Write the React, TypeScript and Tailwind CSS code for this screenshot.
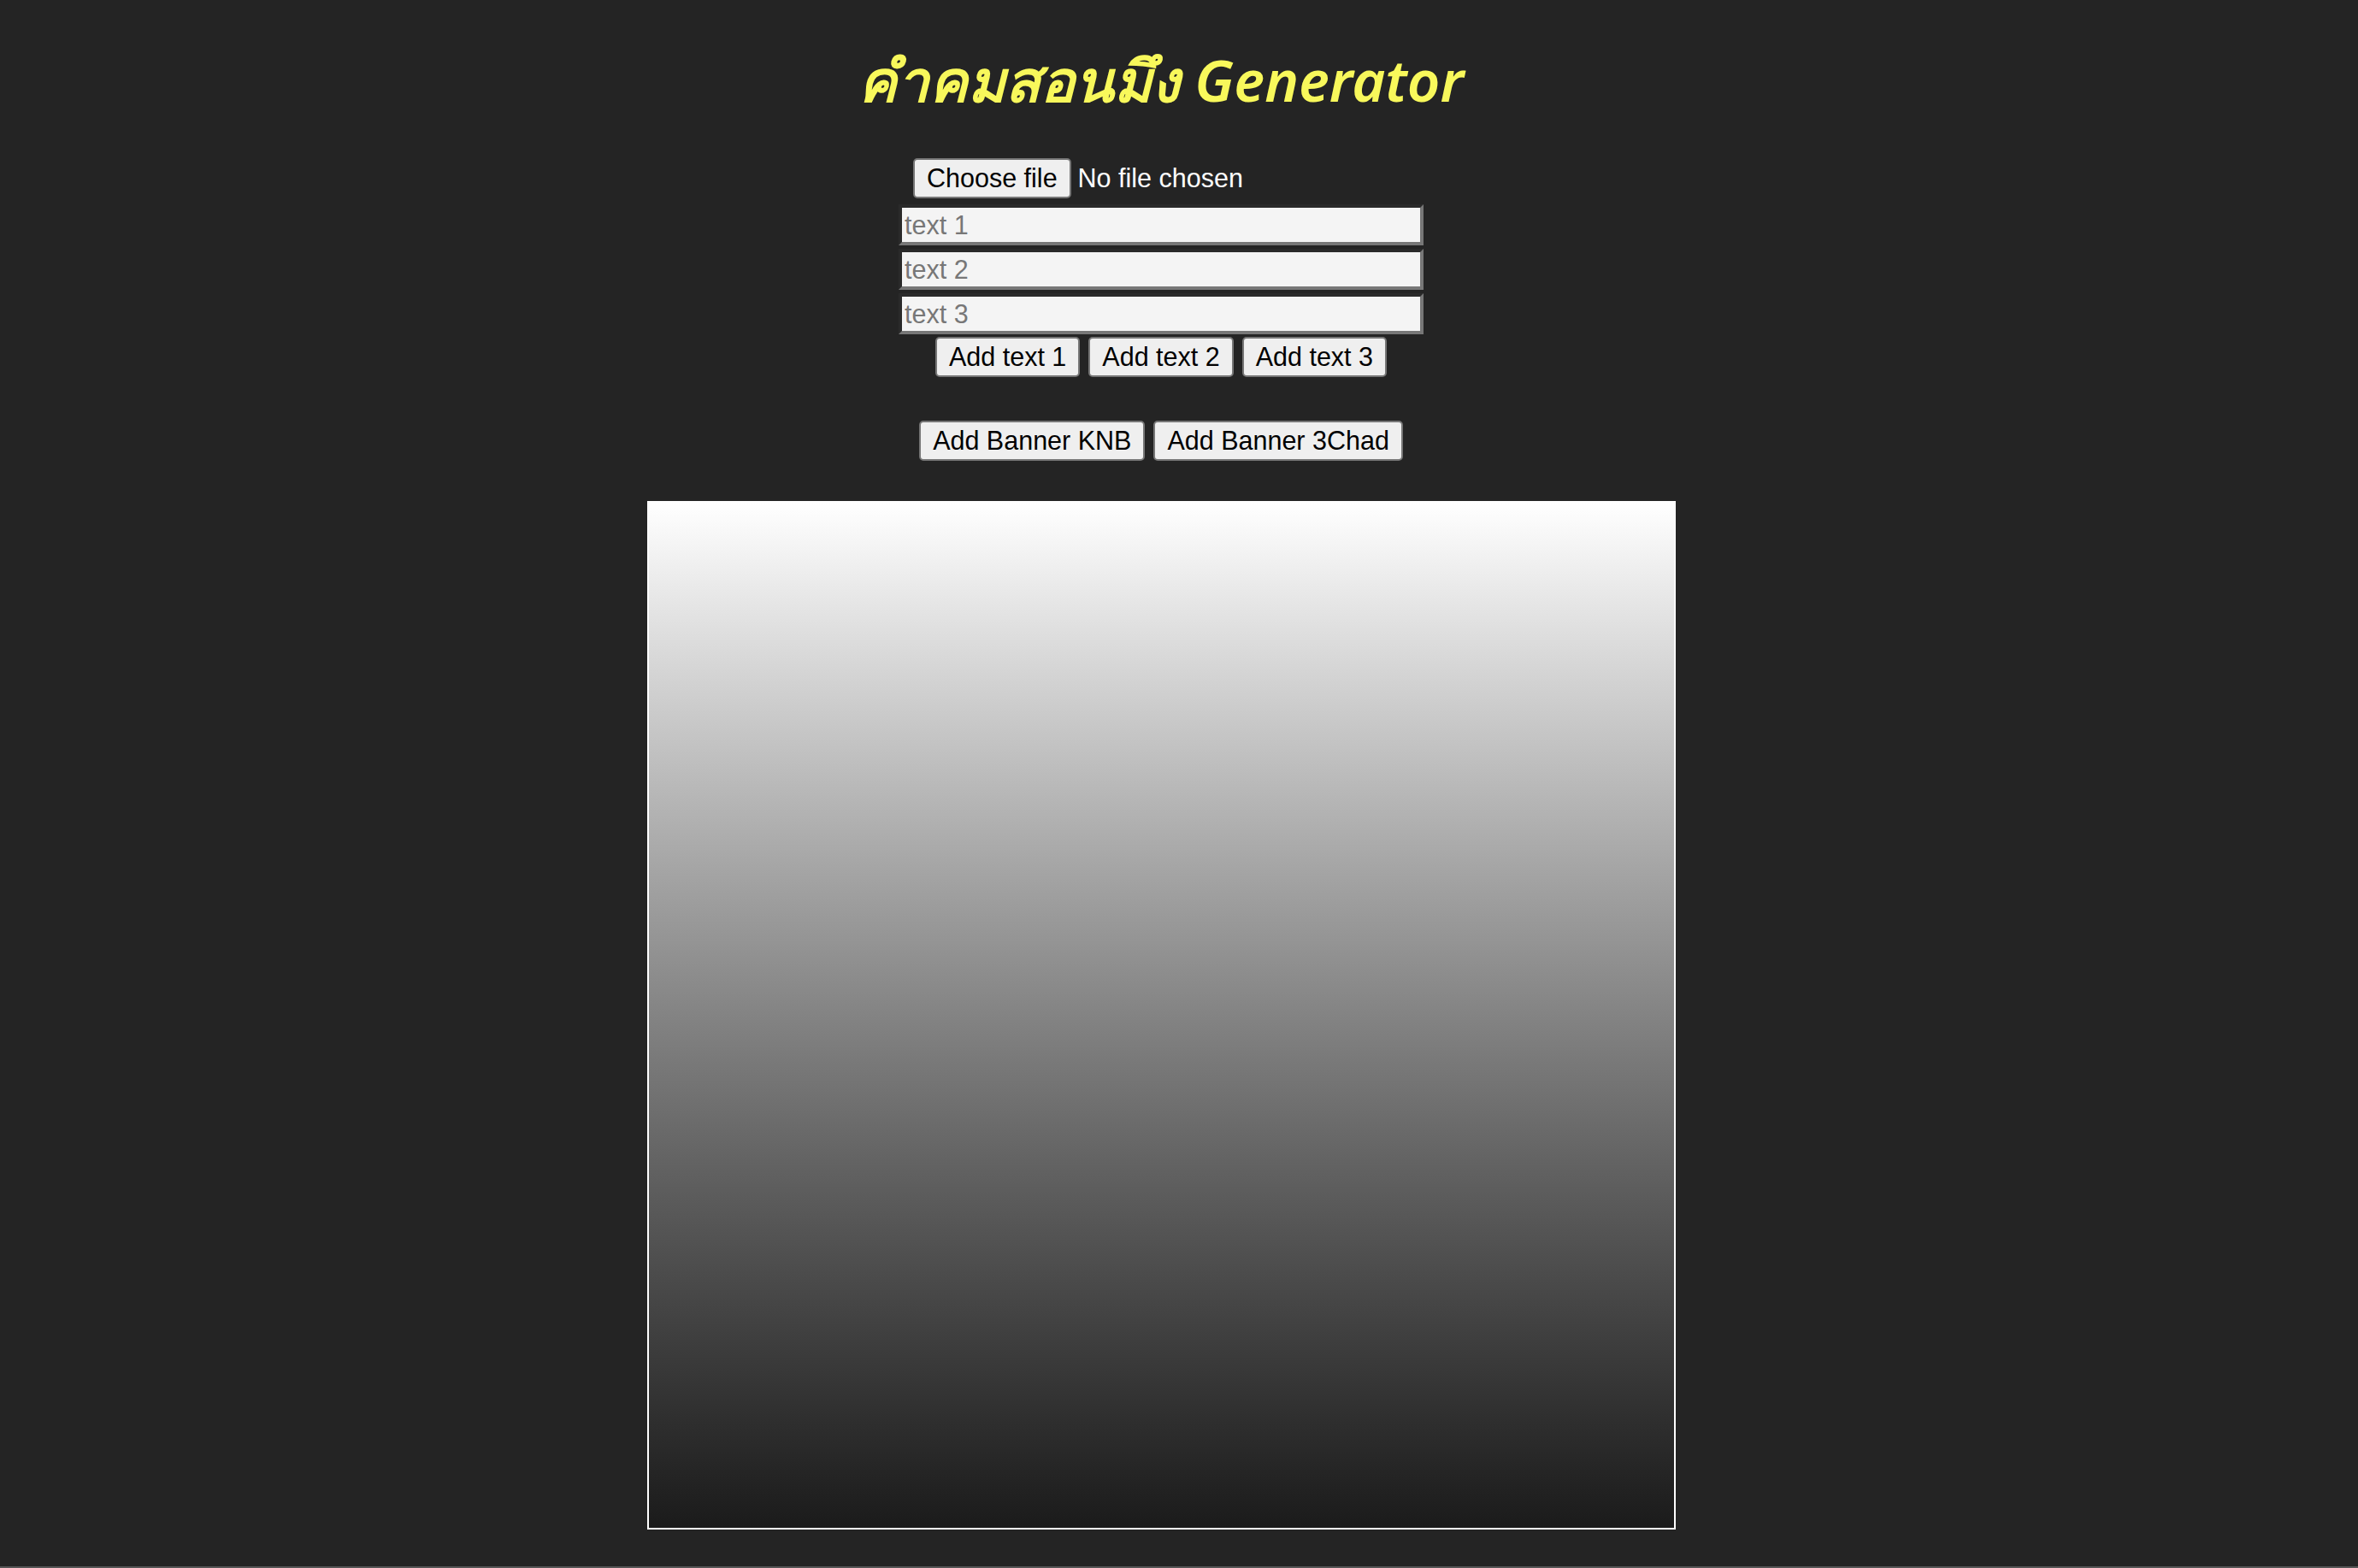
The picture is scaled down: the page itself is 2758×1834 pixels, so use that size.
const btn =
  "h-[47px] px-[14px] bg-[#efefef] border-2 border-[#767676] rounded-[5px] text-black text-[30.5px] leading-none";

const field =
  "block w-[614px] h-[48px] px-[3px] bg-[#f4f4f4] text-[30.5px] text-black placeholder:text-[#777] border-4 border-t-[#2a2a2a] border-l-[#2a2a2a] border-b-[#777] border-r-[#777] outline-none";

export default function App() {
  return (
    <div className="min-h-[1834px] bg-[#242424] flex flex-col font-['Liberation_Sans',Arial,sans-serif]">
      <div className="flex flex-col items-center pr-[42px]">
        <h1 className="mt-[48px] h-[90px] text-[67px] leading-[90px] italic font-semibold text-[#f8f85b] font-['Noto_Sans',sans-serif]">
          คำคมสอนมึง Generator
        </h1>

        <div className="mt-[47px] w-[580px] flex items-center gap-[8px]">
          <button className={btn}>Choose file</button>
          <span className="text-white text-[30.5px]">No file chosen</span>
        </div>

        <div className="mt-[7px] flex flex-col gap-[4px]">
          <input className={field} placeholder="text 1" />
          <input className={field} placeholder="text 2" />
          <input className={field} placeholder="text 3" />
        </div>

        <div className="mt-[3px] flex gap-[10px]">
          <button className={btn}>Add text 1</button>
          <button className={btn}>Add text 2</button>
          <button className={btn}>Add text 3</button>
        </div>

        <div className="mt-[51px] flex gap-[10px]">
          <button className={btn}>Add Banner KNB</button>
          <button className={btn}>Add Banner 3Chad</button>
        </div>

        <div className="mt-[47px] w-[1203px] h-[1203px] border-2 border-white bg-gradient-to-b from-white to-[#1b1b1b]" />
      </div>
      <div className="mt-auto h-[2px] bg-[#555]" />
    </div>
  );
}
